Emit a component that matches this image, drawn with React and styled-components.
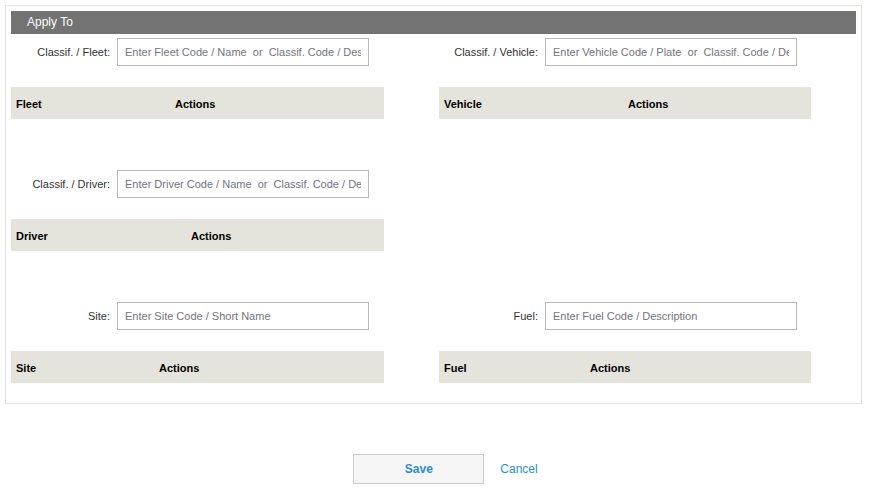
import React from "react";
import styled, { createGlobalStyle } from "styled-components";

const Global = createGlobalStyle`
  html, body { margin: 0; padding: 0; background: #fff; }
  body { font-family: "Liberation Sans", Arial, sans-serif; font-size: 11px; color: #333; }
  * { box-sizing: border-box; }
`;

const Page = styled.div`
  padding: 5px 8px 0 5px;
`;

const Panel = styled.section`
  width: 857px;
  border: 1px solid #e4e3dc;
  padding: 5px 5px 20px 5px;
`;

const Header = styled.div`
  height: 23px;
  background: #737373;
  color: #fff;
  font-size: 12px;
  line-height: 23px;
  padding-left: 16px;
`;

const Grid = styled.div`
  display: grid;
  grid-template-columns: 428px 1fr;
  row-gap: 51px;
  margin-top: 4px;
`;

const Block = styled.div`
  display: flex;
  flex-direction: column;
  gap: 21px;
`;

const FieldRow = styled.label`
  display: flex;
  align-items: center;
  height: 28px;
`;

const Label = styled.span`
  width: 99px;
  text-align: right;
  margin-right: 7px;
  color: #333;
`;

const Input = styled.input`
  width: 252px;
  height: 28px;
  border: 1px solid #b9b9b9;
  padding: 0 7px;
  font-family: inherit;
  font-size: 11px;
  color: #333;
  outline: none;
  &::placeholder { color: #747480; }
`;

const Table = styled.table`
  width: ${(p) => p.$w}px;
  border-collapse: collapse;
  background: #e5e4dc;
`;

const Th = styled.th`
  height: 32px;
  padding: 1px 0 0 5px;
  text-align: left;
  font-weight: bold;
  color: #000;
  font-size: 11px;
  vertical-align: middle;
  width: ${(p) => (p.$w ? `${p.$w}px` : "auto")};
`;

const Footer = styled.div`
  display: flex;
  justify-content: center;
  align-items: center;
  padding-left: 24px;
  margin-top: 50px;
  gap: 16px;
`;

const SaveButton = styled.button`
  width: 131px;
  height: 30px;
  background: #f5f5f5;
  border: 1px solid #cccccc;
  color: #2c8ed2;
  font-family: inherit;
  font-size: 12px;
  font-weight: bold;
  cursor: pointer;
`;

const CancelLink = styled.a`
  color: #2c8ed2;
  font-size: 12px;
  text-decoration: none;
  cursor: pointer;
`;

const Spacer = styled.div``;

function Section({ label, placeholder, col, actionsAt, width }) {
  return (
    <Block>
      <FieldRow>
        <Label>{label}</Label>
        <Input placeholder={placeholder} />
      </FieldRow>
      <Table $w={width}>
        <thead>
          <tr>
            <Th $w={actionsAt}>{col}</Th>
            <Th>Actions</Th>
          </tr>
        </thead>
      </Table>
    </Block>
  );
}

export default function App() {
  return (
    <>
      <Global />
      <Page>
        <Panel>
          <Header>Apply To</Header>
          <Grid>
            <Section
              label="Classif. / Fleet:"
              placeholder="Enter Fleet Code / Name  or  Classif. Code / Description"
              col="Fleet"
              actionsAt={159}
              width={373}
            />
            <Section
              label="Classif. / Vehicle:"
              placeholder="Enter Vehicle Code / Plate  or  Classif. Code / Description"
              col="Vehicle"
              actionsAt={184}
              width={372}
            />
            <Section
              label="Classif. / Driver:"
              placeholder="Enter Driver Code / Name  or  Classif. Code / Description"
              col="Driver"
              actionsAt={175}
              width={373}
            />
            <Spacer />
            <Section
              label="Site:"
              placeholder="Enter Site Code / Short Name"
              col="Site"
              actionsAt={143}
              width={373}
            />
            <Section
              label="Fuel:"
              placeholder="Enter Fuel Code / Description"
              col="Fuel"
              actionsAt={146}
              width={372}
            />
          </Grid>
        </Panel>
        <Footer>
          <SaveButton>Save</SaveButton>
          <CancelLink>Cancel</CancelLink>
        </Footer>
      </Page>
    </>
  );
}
